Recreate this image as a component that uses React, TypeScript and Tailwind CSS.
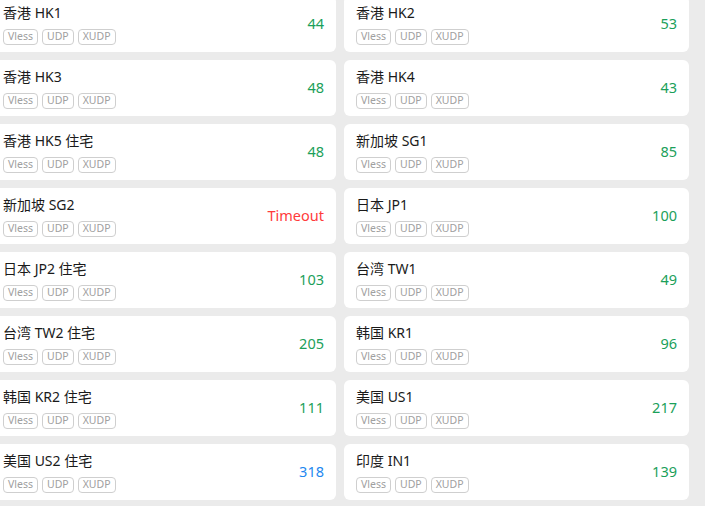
import React from "react";

type Node = { name: string; ping: string; tone?: "ok" | "slow" | "fail" };

const nodes: Node[] = [
  { name: "香港 HK1", ping: "44" },
  { name: "香港 HK2", ping: "53" },
  { name: "香港 HK3", ping: "48" },
  { name: "香港 HK4", ping: "43" },
  { name: "香港 HK5 住宅", ping: "48" },
  { name: "新加坡 SG1", ping: "85" },
  { name: "新加坡 SG2", ping: "Timeout", tone: "fail" },
  { name: "日本 JP1", ping: "100" },
  { name: "日本 JP2 住宅", ping: "103" },
  { name: "台湾 TW1", ping: "49" },
  { name: "台湾 TW2 住宅", ping: "205" },
  { name: "韩国 KR1", ping: "96" },
  { name: "韩国 KR2 住宅", ping: "111" },
  { name: "美国 US1", ping: "217" },
  { name: "美国 US2 住宅", ping: "318", tone: "slow" },
  { name: "印度 IN1", ping: "139" },
];

const toneClass: Record<string, string> = {
  ok: "text-[#1ba05a]",
  slow: "text-[#1e88f0]",
  fail: "text-[#ff3b3b]",
};

const tags = ["Vless", "UDP", "XUDP"];

function NodeCard({ node }: { node: Node }) {
  return (
    <div className="flex h-[56px] items-center justify-between rounded-[6px] bg-white pl-3 pr-3">
      <div className="flex flex-col">
        <div className="text-[14px] leading-[18px] text-[#1a1a1a]">{node.name}</div>
        <div className="mt-[7px] flex gap-[4px]">
          {tags.map(t => (
            <span
              key={t}
              className="flex h-[16px] items-center rounded-[4px] border border-[#cfcfcf] px-[4px] text-[10.5px] leading-none text-[#a0a0a0]"
            >
              {t}
            </span>
          ))}
        </div>
      </div>
      <div className={`text-[14.5px] ${toneClass[node.tone ?? "ok"]}`}>{node.ping}</div>
    </div>
  );
}

export default function App() {
  return (
    <div
      className="h-[506px] w-[705px] overflow-hidden bg-[#ebebeb]"
      style={{ fontFamily: '"Noto Sans", "Noto Sans CJK SC", sans-serif' }}
    >
      <div className="-ml-[9px] -mt-[4px] grid grid-cols-[345px_345px] gap-2">
        {nodes.map(n => (
          <NodeCard key={n.name} node={n} />
        ))}
      </div>
    </div>
  );
}
